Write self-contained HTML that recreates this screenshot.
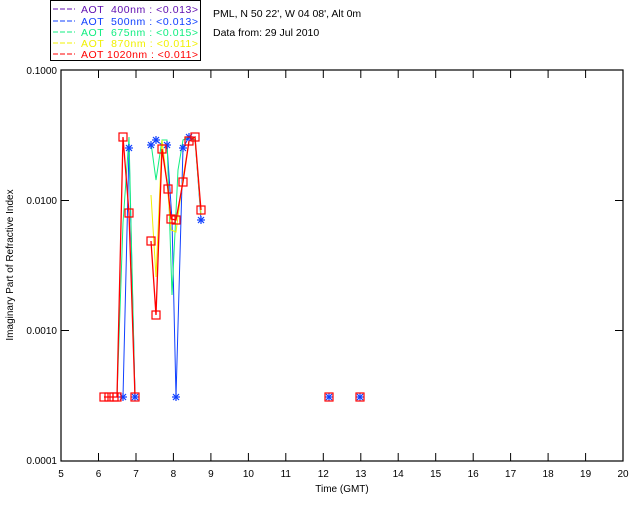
<!DOCTYPE html>
<html><head><meta charset="utf-8"><style>
html,body{margin:0;padding:0;background:#fff;}
svg{display:block;font-family:"Liberation Sans",sans-serif;}
</style></head><body>
<svg width="640" height="512" viewBox="0 0 640 512" xmlns="http://www.w3.org/2000/svg">
<defs>
<g id="st" stroke="#1040ff" stroke-width="1.2"><line x1="-4" y1="0" x2="4" y2="0"/><line x1="0" y1="-4" x2="0" y2="4"/><line x1="-3" y1="-3" x2="3" y2="3"/><line x1="-3" y1="3" x2="3" y2="-3"/></g>
</defs>
<rect width="640" height="512" fill="#fff"/>
<!-- legend -->
<rect x="50.5" y="0.5" width="150" height="60" fill="none" stroke="#000" stroke-width="1"/>
<g font-size="10.5" stroke-width="1">
<line x1="53" y1="9" x2="75" y2="9" stroke="#6010b0" stroke-dasharray="5,2"/>
<text x="81" y="13" fill="#6010b0" textLength="117" lengthAdjust="spacing" xml:space="preserve">AOT  400nm : &lt;0.013&gt;</text>
<line x1="53" y1="21" x2="75" y2="21" stroke="#1040ff" stroke-dasharray="5,2"/>
<text x="81" y="25" fill="#1040ff" textLength="117" lengthAdjust="spacing" xml:space="preserve">AOT  500nm : &lt;0.013&gt;</text>
<line x1="53" y1="32" x2="75" y2="32" stroke="#10ee80" stroke-dasharray="5,2"/>
<text x="81" y="36" fill="#10ee80" textLength="117" lengthAdjust="spacing" xml:space="preserve">AOT  675nm : &lt;0.015&gt;</text>
<line x1="53" y1="43" x2="75" y2="43" stroke="#f0f000" stroke-dasharray="5,2"/>
<text x="81" y="47" fill="#f0f000" textLength="117" lengthAdjust="spacing" xml:space="preserve">AOT  870nm : &lt;0.011&gt;</text>
<line x1="53" y1="54" x2="75" y2="54" stroke="#ff0000" stroke-dasharray="5,2"/>
<text x="81" y="58" fill="#ff0000" textLength="117" lengthAdjust="spacing" xml:space="preserve">AOT 1020nm : &lt;0.011&gt;</text>
</g>
<text x="213" y="17" font-size="10.5" fill="#000">PML, N 50 22', W 04 08', Alt 0m</text>
<text x="213" y="36" font-size="10.5" fill="#000">Data from: 29 Jul 2010</text>
<!-- axes -->
<rect x="61" y="70" width="562" height="391" fill="none" stroke="#000" stroke-width="1.2"/>
<g stroke="#000" stroke-width="1">
<line x1="98.5" y1="461" x2="98.5" y2="453"/><line x1="98.5" y1="70" x2="98.5" y2="78"/>
<line x1="136" y1="461" x2="136" y2="453"/><line x1="136" y1="70" x2="136" y2="78"/>
<line x1="173.4" y1="461" x2="173.4" y2="453"/><line x1="173.4" y1="70" x2="173.4" y2="78"/>
<line x1="210.9" y1="461" x2="210.9" y2="453"/><line x1="210.9" y1="70" x2="210.9" y2="78"/>
<line x1="248.4" y1="461" x2="248.4" y2="453"/><line x1="248.4" y1="70" x2="248.4" y2="78"/>
<line x1="285.8" y1="461" x2="285.8" y2="453"/><line x1="285.8" y1="70" x2="285.8" y2="78"/>
<line x1="323.3" y1="461" x2="323.3" y2="453"/><line x1="323.3" y1="70" x2="323.3" y2="78"/>
<line x1="360.8" y1="461" x2="360.8" y2="453"/><line x1="360.8" y1="70" x2="360.8" y2="78"/>
<line x1="398.2" y1="461" x2="398.2" y2="453"/><line x1="398.2" y1="70" x2="398.2" y2="78"/>
<line x1="435.7" y1="461" x2="435.7" y2="453"/><line x1="435.7" y1="70" x2="435.7" y2="78"/>
<line x1="473.2" y1="461" x2="473.2" y2="453"/><line x1="473.2" y1="70" x2="473.2" y2="78"/>
<line x1="510.6" y1="461" x2="510.6" y2="453"/><line x1="510.6" y1="70" x2="510.6" y2="78"/>
<line x1="548.1" y1="461" x2="548.1" y2="453"/><line x1="548.1" y1="70" x2="548.1" y2="78"/>
<line x1="585.6" y1="461" x2="585.6" y2="453"/><line x1="585.6" y1="70" x2="585.6" y2="78"/>
<line x1="61" y1="200.5" x2="69" y2="200.5"/><line x1="623" y1="200.5" x2="615" y2="200.5"/>
<line x1="61" y1="330.5" x2="69" y2="330.5"/><line x1="623" y1="330.5" x2="615" y2="330.5"/>
</g>
<g font-size="10" fill="#000" text-anchor="middle">
<text x="61" y="477">5</text><text x="98.5" y="477">6</text><text x="136" y="477">7</text><text x="173.4" y="477">8</text>
<text x="210.9" y="477">9</text><text x="248.4" y="477">10</text><text x="285.8" y="477">11</text><text x="323.3" y="477">12</text>
<text x="360.8" y="477">13</text><text x="398.2" y="477">14</text><text x="435.7" y="477">15</text><text x="473.2" y="477">16</text>
<text x="510.6" y="477">17</text><text x="548.1" y="477">18</text><text x="585.6" y="477">19</text><text x="623" y="477">20</text>
<text x="342" y="492">Time (GMT)</text>
</g>
<g font-size="10" fill="#000" text-anchor="end">
<text x="57" y="74">0.1000</text><text x="57" y="204">0.0100</text><text x="57" y="334">0.0010</text><text x="57" y="464">0.0001</text>
</g>
<text transform="translate(13,265) rotate(-90)" font-size="10" text-anchor="middle" fill="#000">Imaginary Part of Refractive Index</text>
<!-- data -->
<g fill="none" stroke-width="1">
<polyline stroke="#1040ff" points="117,397 123,397 129,148 135,397"/>
<polyline stroke="#1040ff" points="151,145 156,140 162,145 167,145 172,220 176,397 183,148 189,137 195,137 201,220"/>
<polyline stroke="#10ee80" points="117,397 123,223 129,137 135,397"/>
<polyline stroke="#10ee80" points="151,143 156,180 162,140 167,140 172,295 178,170 183,140 189,137 195,140 201,215"/>
<polyline stroke="#f0f000" points="151,195 156,277 162,140 167,182 171,230 176,232 183,178 189,141 195,137 201,215"/>
<polyline stroke="#ff0000" stroke-width="1.3" points="104,397 117,397 123,137 129,213 135,397"/>
<polyline stroke="#ff0000" stroke-width="1.3" points="151,241 156,315 162,149 168,189 171,219 176,220 183,182 189,141 195,137 201,210"/>
</g>
<g>
<use href="#st" x="123" y="397"/><use href="#st" x="129" y="148"/><use href="#st" x="151" y="145"/><use href="#st" x="156" y="140"/>
<use href="#st" x="167" y="145"/><use href="#st" x="176" y="397"/><use href="#st" x="183" y="148"/><use href="#st" x="189" y="137"/>
<use href="#st" x="201" y="220"/><use href="#st" x="135" y="397"/><use href="#st" x="329" y="397"/><use href="#st" x="360" y="397"/>
</g>
<g fill="none" stroke="#ff0000" stroke-width="1.2">
<rect x="100" y="393" width="8" height="8"/><rect x="105" y="393" width="8" height="8"/><rect x="110" y="393" width="8" height="8"/><rect x="113" y="393" width="8" height="8"/>
<rect x="119" y="133" width="8" height="8"/><rect x="125" y="209" width="8" height="8"/><rect x="131" y="393" width="8" height="8"/>
<rect x="147" y="237" width="8" height="8"/><rect x="152" y="311" width="8" height="8"/><rect x="158" y="145" width="8" height="8"/>
<rect x="164" y="185" width="8" height="8"/><rect x="167" y="215" width="8" height="8"/><rect x="172" y="216" width="8" height="8"/>
<rect x="179" y="178" width="8" height="8"/><rect x="185" y="137" width="8" height="8"/><rect x="191" y="133" width="8" height="8"/>
<rect x="197" y="206" width="8" height="8"/>
<rect x="325" y="393" width="8" height="8"/><rect x="356" y="393" width="8" height="8"/>
</g>
</svg>
</body></html>
